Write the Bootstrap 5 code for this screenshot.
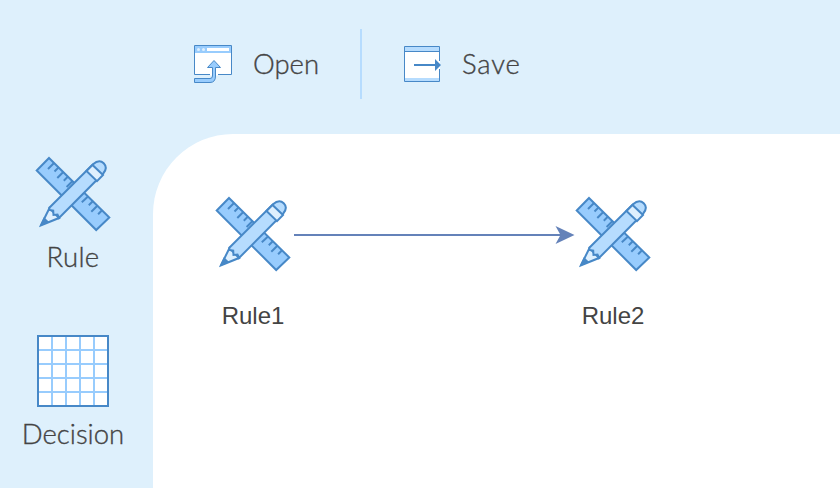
<!DOCTYPE html>
<html lang="en">
<head>
<meta charset="utf-8">
<meta name="viewport" content="width=device-width, initial-scale=1">
<title>Rule designer</title>
<link href="https://cdn.jsdelivr.net/npm/bootstrap@5.3.0/dist/css/bootstrap.min.css" rel="stylesheet">
<style>
body{background:#def0fc;color:#444;font-family:Lato,sans-serif}
.bar{height:134px;padding:0 0 6px 190px}
.tool{font-size:27.5px;font-weight:300;line-height:34px;color:#444;background:none;border:0;padding:0;-webkit-text-stroke:.35px #444}
.divider{width:2px;height:70px;background:#b6dcfe}
.palette{width:153px;padding-right:7px}
.palette .tool{width:146px}
.sheet{background:#fff;border-top-left-radius:80px}
.rule-node{position:absolute;width:120px;font-family:"Liberation Sans",Arial,sans-serif;font-size:24px;line-height:28px}
.rule-node svg{margin-bottom:28px}
.n1{left:40px;top:60px}
.n2{left:400px;top:60px}
.link-line{position:absolute;left:141px;top:91px}
svg{display:block;flex:none}
.open-label{margin-left:15px;width:107px;text-align:left;padding-bottom:1px}
.save-btn{margin-left:40px}
.save-label{margin-left:20px;letter-spacing:.8px;padding-bottom:1px}
.p-rule{margin-top:20px}
.p-rule span{margin-top:6px;letter-spacing:.3px}
.p-decision{margin-top:61px}
.p-decision span{margin-top:10px}
</style>
<script src="https://cdn.jsdelivr.net/npm/bootstrap@5.3.0/dist/js/bootstrap.bundle.min.js"></script>
</head>
<body class="vh-100 overflow-hidden d-flex flex-column">
<svg width="0" height="0" class="position-absolute" aria-hidden="true">
<symbol id="tools" viewBox="0 0 80 80">
<g stroke="#4788c7" stroke-width="2">
<path fill="#98ccfd" d="M16 4L76.300 63.500 63.200 76 3.700 16.500z"/>
<path fill="none" d="M21 9l-6 6M25.700 13.300l-4.200 4.200M30.300 18l-6 6M35 22.500l-4.200 4.200M39.600 27l-6 6M55.300 42.300l-6.500 6M60 47l-4.200 4.200M64.600 51.500l-6.300 6.300M69.300 56l-4.200 4.200"/>
<path fill="#dff0fe" d="M8 71.300L16.500 54 26 64z"/>
<path fill="#b6dcfe" d="M16.300 53.700L60 10.300Q66.200 4.700 70.700 9.200T70.200 19.500L26 64l-1.500-3.500-4 .5-.3-4.300-3.700-.7z"/>
<path fill="#dff0fe" d="M53.500 17l6-6L70 21l-6 6.200z"/>
</g>
<path fill="#4788c7" d="M6.500 72.500l4.400-9.500 5.300 5z"/>
</symbol>
</svg>
<header class="bar d-flex align-items-center">
<button class="tool d-flex align-items-center">
<svg width="48" height="48" viewBox="0 0 48 48">
<path fill="#fff" stroke="#4788c7" d="M4.500 5.500h37v29h-37z"/>
<path fill="#98ccfd" d="M5 6h36v7H5z"/>
<g fill="#dff0fe"><circle cx="8.500" cy="9.500" r="1.500"/><circle cx="13.500" cy="9.500" r="1.500"/></g>
<path fill="#fff" d="M17 8h22v3H17z"/>
<path stroke="#fff" stroke-width="1.500" d="M20 34.700h8"/>
<path fill="#98ccfd" stroke="#4788c7" d="M4.500 42.500v-4H20q2.500 0 2.500-2.500V27.500h-5L24 20.500l6.500 7h-5V36q0 6.500-5.500 6.500z"/>
</svg>
<span class="open-label">Open</span></button>
<div class="divider"></div>
<button class="tool d-flex align-items-center save-btn">
<svg width="40" height="40" viewBox="0 0 40 40">
<path fill="#fff" stroke="#4788c7" d="M2.500 2.500h35v35h-35z"/>
<path fill="#b6dcfe" d="M3 3h34v4H3zM3 34h34v3H3z"/>
<path stroke="#4788c7" d="M3 7.500h34"/>
<path fill="#fff" d="M36 17h2v8h-2z"/>
<path fill="#4788c7" d="M12 20h21v-5l6 6-6 6v-5H12z"/>
</svg>
<span class="save-label">Save</span></button>
</header>
<div class="d-flex flex-grow-1">
<nav class="palette flex-shrink-0 d-flex flex-column">
<button class="tool d-flex flex-column align-items-center p-rule"><svg width="80" height="80"><use href="#tools"/></svg><span>Rule</span></button>
<button class="tool d-flex flex-column align-items-center p-decision">
<svg width="72" height="72" viewBox="0 0 72 72"><path fill="#fff" stroke="#4788c7" stroke-width="2" d="M1 1h70v70H1z"/><path fill="none" stroke="#98ccfd" stroke-width="2" d="M15 2v68M29 2v68M43 2v68M57 2v68M2 15h68M2 29h68M2 43h68M2 57h68"/></svg>
<span>Decision</span></button>
</nav>
<main class="sheet flex-grow-1 position-relative">
<div class="rule-node n1 d-flex flex-column align-items-center"><svg width="80" height="80"><use href="#tools"/></svg><span>Rule1</span></div>
<svg class="link-line" width="282" height="20" viewBox="0 0 282 20"><path stroke="#6482b9" stroke-width="2" d="M0 10h270"/><path fill="#6482b9" d="M261.500 1l19 9-19 9 5-9z"/></svg>
<div class="rule-node n2 d-flex flex-column align-items-center"><svg width="80" height="80"><use href="#tools"/></svg><span>Rule2</span></div>
</main>
</div>
</body>
</html>
